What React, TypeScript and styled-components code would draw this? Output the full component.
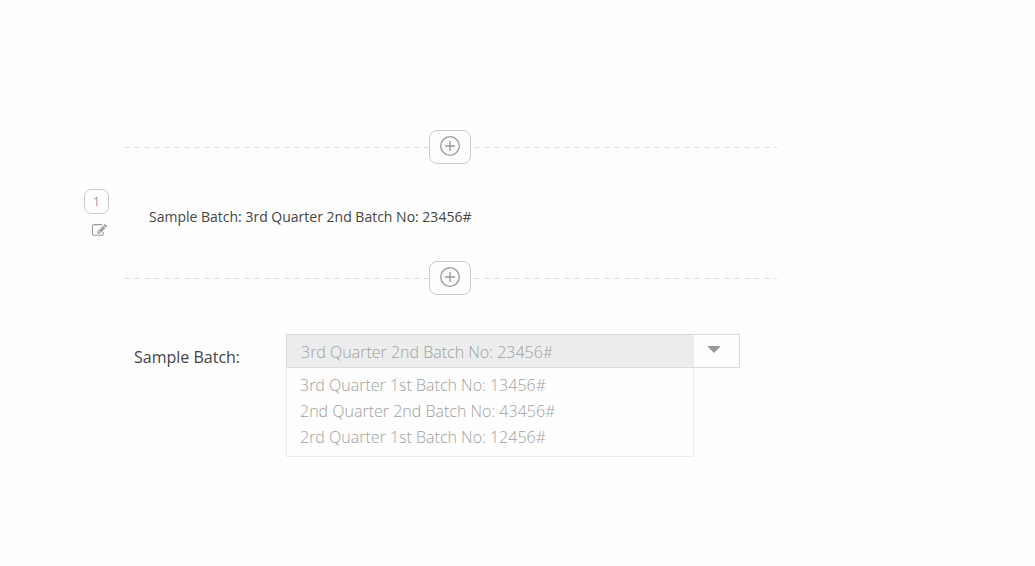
import React, { useState } from 'react';
import styled, { createGlobalStyle } from 'styled-components';

const GlobalStyle = createGlobalStyle`
  *, *::before, *::after { box-sizing: border-box; }
  body {
    margin: 0;
    background: #fefefe;
    color: #444;
    font-family: 'Open Sans', sans-serif;
    font-size: 14px;
  }
  button, select { font: inherit; color: inherit; }
`;

const Page = styled.main`
  padding: 130px 24px 48px 84px;
`;

const Editor = styled.div`
  max-width: 693px;
`;

const Divider = styled.div`
  display: flex;
  justify-content: center;
  margin-left: 40px;
  padding-right: 1px;
  background: repeating-linear-gradient(to right, #dedede 0 6px, transparent 6px 10px)
    0 17px / 100% 1px no-repeat;
`;

const AddButton = styled.button`
  display: grid;
  place-items: center;
  width: 42px;
  height: 34px;
  padding: 0 0 2px;
  border: 1px solid #ccc;
  border-radius: 8px;
  background: #fefefe;
  color: #999;
  cursor: pointer;
`;

const BatchRow = styled.section`
  display: flex;
  gap: 40px;
  padding: 25px 0 23px;
`;

const Gutter = styled.div`
  display: flex;
  flex-direction: column;
  align-items: center;
  gap: 9px;
  width: 25px;
`;

const Badge = styled.span`
  width: 25px;
  height: 25px;
  border: 1px solid #ccc;
  border-radius: 7px;
  color: #999;
  font-size: 12px;
  line-height: 23px;
  text-align: center;
`;

const EditButton = styled.button`
  display: grid;
  place-items: center;
  width: 15px;
  height: 15px;
  margin-left: 6px;
  padding: 0;
  border: 0;
  background: none;
  color: #999;
  cursor: pointer;
`;

const Summary = styled.p`
  margin: 0;
  padding-top: 18px;
  line-height: 20px;
`;

const FormRow = styled.section`
  display: flex;
  align-items: flex-start;
  padding: 39px 37px 0 50px;
`;

const FieldLabel = styled.label`
  flex: 0 0 152px;
  padding-top: 12px;
  font-size: 16px;
  line-height: 22px;
`;

const Field = styled.div`
  flex: 1;
  min-width: 0;
`;

const SelectBox = styled.div`
  display: grid;
  grid-template-columns: 1fr 46px;
  height: 34px;

  & > * { grid-row: 1; }
`;

const BatchSelect = styled.select`
  grid-column: 1 / -1;
  appearance: none;
  padding: 2px 60px 0 14px;
  border: 1px solid #dadada;
  border-radius: 0;
  outline: 0;
  background: linear-gradient(to left, #fefefe 45px, #ededed 45px);
  color: #a0a0a0;
  font-size: 16px;
  font-weight: 300;
`;

const Arrow = styled.svg`
  grid-column: 2;
  align-self: start;
  justify-self: center;
  margin: 12px 6px 0 0;
  pointer-events: none;
`;

const OptionList = styled.ul`
  margin: 0 46px 0 0;
  padding: 4px 0 6px;
  border: 1px solid #ececec;
  border-top: 0;
  list-style: none;
`;

const OptionButton = styled.button`
  display: block;
  width: 100%;
  padding: 0 13px;
  border: 0;
  background: none;
  color: #a0a0a0;
  font-size: 16px;
  font-weight: 300;
  line-height: 26px;
  text-align: left;
  cursor: pointer;
`;

const current = '3rd Quarter 2nd Batch No: 23456#';
const others = [
  '3rd Quarter 1st Batch No: 13456#',
  '2nd Quarter 2nd Batch No: 43456#',
  '2rd Quarter 1st Batch No: 12456#',
];

function AddDivider({ label }: { label: string }) {
  return (
    <Divider>
      <AddButton type="button" aria-label={label}>
        <svg width="20" height="20" viewBox="0 0 20 20" fill="none" stroke="currentColor" aria-hidden="true">
          <circle cx="10" cy="10" r="9.3" strokeWidth="1.3" />
          <path d="M10 5v10M5 10h10" strokeWidth="1.4" />
        </svg>
      </AddButton>
    </Divider>
  );
}

export default function App() {
  const [batch, setBatch] = useState(current);

  return (
    <>
      <GlobalStyle />
      <Page>
        <Editor>
          <AddDivider label="Add item above" />
          <BatchRow>
            <Gutter>
              <Badge>1</Badge>
              <EditButton type="button" aria-label="Edit item">
                <svg width="15" height="15" viewBox="0 0 1792 1792" fill="currentColor" aria-hidden="true">
                  <path d="M888 1184l116-116-152-152-116 116v56h96v96h56zm440-720q-16-16-33 1l-350 350q-17 17-1 33t33-1l350-350q17-17 1-33zm80 594v190q0 119-84.5 203.5t-203.5 84.5h-832q-119 0-203.5-84.5t-84.5-203.5v-832q0-119 84.5-203.5t203.5-84.5h832q63 0 117 25 15 7 18 23 3 17-9 29l-49 49q-14 14-32 8-23-6-45-6h-832q-66 0-113 47t-47 113v832q0 66 47 113t113 47h832q66 0 113-47t47-113v-126q0-13 9-22l64-64q15-15 35-7t20 29zm-96-738l288 288-672 672h-288v-288zm444 132l-92 92-288-288 92-92q28-28 68-28t68 28l152 152q28 28 28 68t-28 68z" />
                </svg>
              </EditButton>
            </Gutter>
            <Summary>Sample Batch: {batch}</Summary>
          </BatchRow>
          <AddDivider label="Add item below" />
          <FormRow>
            <FieldLabel htmlFor="batch">Sample Batch:</FieldLabel>
            <Field>
              <SelectBox>
                <BatchSelect id="batch" value={batch} onChange={(e) => setBatch(e.target.value)}>
                  {[current, ...others].map((name) => (
                    <option key={name}>{name}</option>
                  ))}
                </BatchSelect>
                <Arrow width="12" height="7" viewBox="0 0 12 7" fill="#999" aria-hidden="true">
                  <path d="M0 0h12v1L6 7 0 1z" />
                </Arrow>
              </SelectBox>
              <OptionList>
                {others.map((name) => (
                  <li key={name}>
                    <OptionButton type="button" onClick={() => setBatch(name)}>
                      {name}
                    </OptionButton>
                  </li>
                ))}
              </OptionList>
            </Field>
          </FormRow>
        </Editor>
      </Page>
    </>
  );
}
